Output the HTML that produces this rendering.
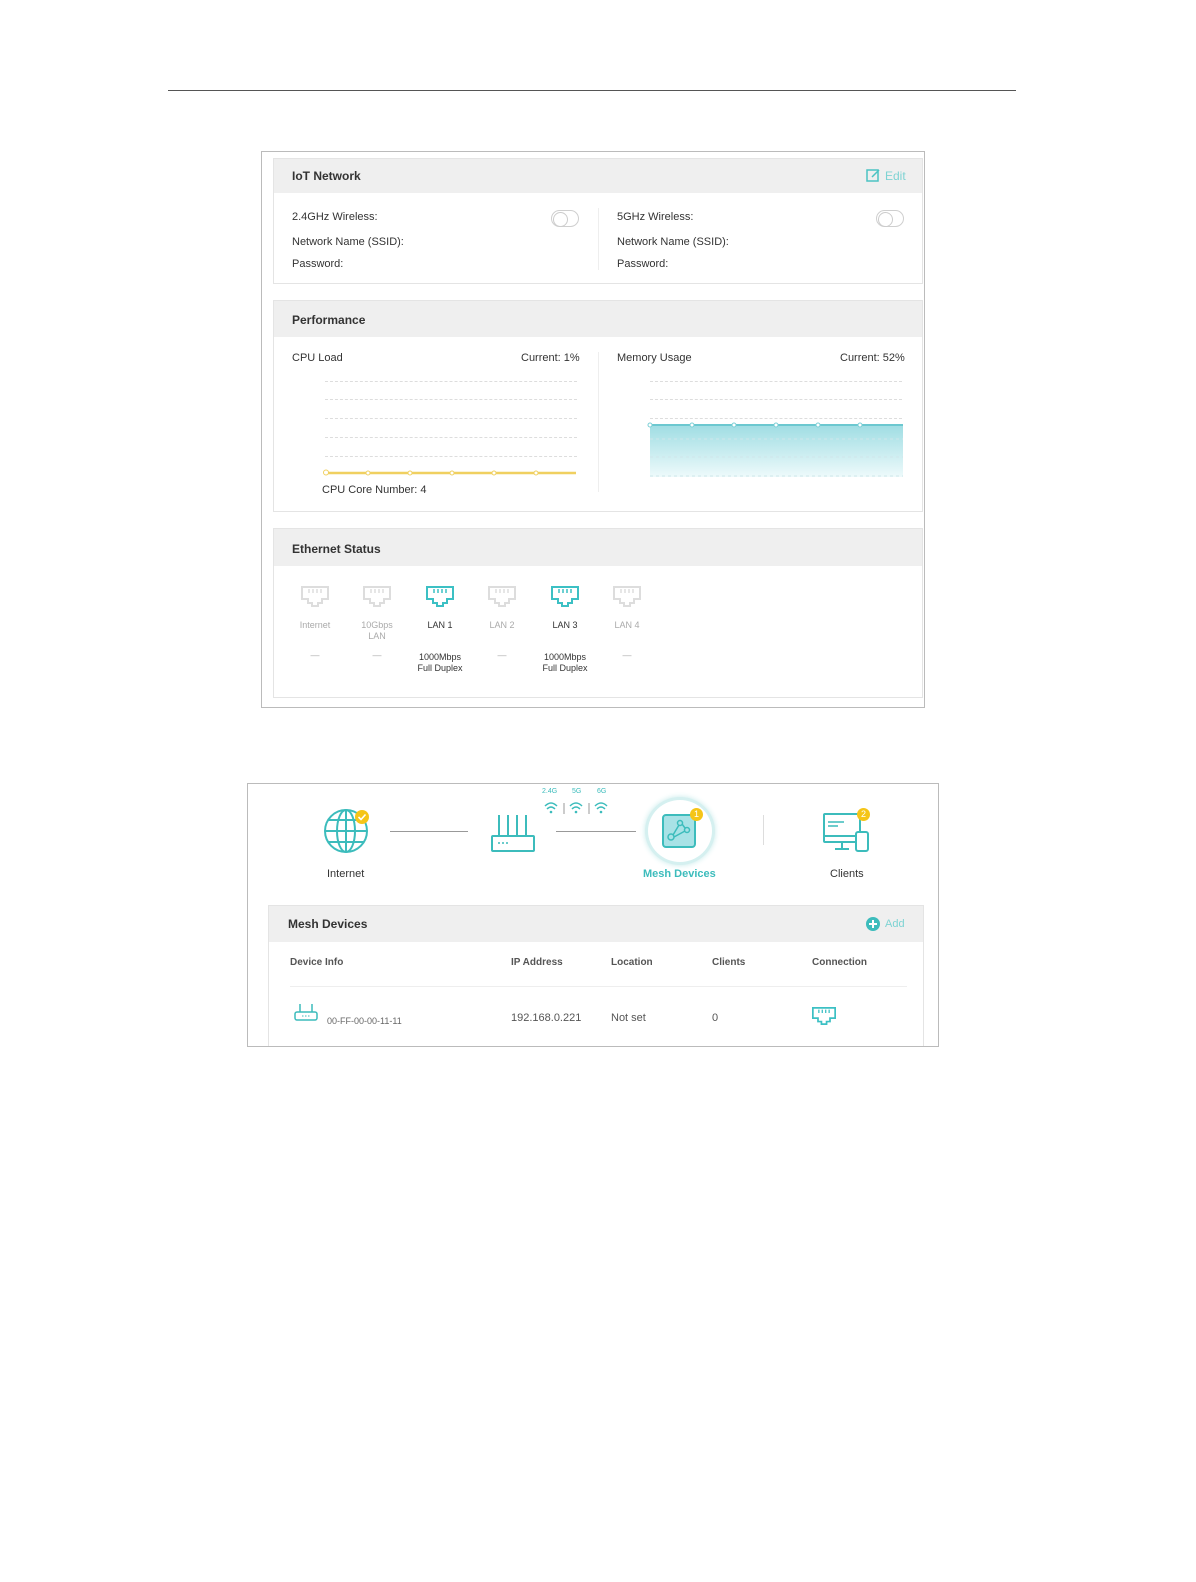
<!DOCTYPE html>
<html style="width:1196px;height:1582px;overflow:hidden"><head><meta charset="utf-8"><style>
*{margin:0;padding:0;box-sizing:border-box}
html,body{width:1196px;height:1582px;overflow:hidden}
body{background:#fff;position:relative;font-family:"Liberation Sans",sans-serif;color:#333}
.a{position:absolute}
.t{font-size:11px;color:#333;white-space:nowrap}
.b{font-weight:bold;font-size:12px;color:#333}
.panel{position:absolute;border:1px solid #e4e4e4;background:#fff;overflow:hidden}
.hdr{position:absolute;left:0;right:0;top:0;background:#efefef}
.tog{position:absolute;width:28px;height:17px;border:1px solid #cfcfcf;border-radius:9px;background:#fff}
.tog:after{content:"";position:absolute;left:1px;top:1px;width:13px;height:13px;border-radius:50%;border:1px solid #ccc;background:#fff}
.dash{position:absolute;border-top:1px dashed #ddd;height:0}
.eth{position:absolute;text-align:center;font-size:9px;color:#aaa;width:50px}
</style></head><body>
<div class="a" style="left:168px;top:90px;width:848px;height:1px;background:#555"></div>

<div class="a" style="left:261px;top:151px;width:664px;height:557px;border:1px solid #bbb"></div>

<div class="panel" style="left:273px;top:158px;width:650px;height:126px">
 <div class="hdr" style="height:34px"></div>
 <div class="a b" style="left:18px;top:10px">IoT Network</div>
 <svg class="a" style="left:592px;top:9px" width="15" height="15" viewBox="0 0 15 15"><rect x="1" y="2" width="11" height="11" fill="none" stroke="#4cc3c3" stroke-width="1.5"/><path d="M6 9 L13 2" stroke="#4cc3c3" stroke-width="1.5"/></svg>
 <div class="a" style="left:611px;top:10px;font-size:12px;color:#7dd3d3">Edit</div>
 <div class="a t" style="left:18px;top:52px">2.4GHz Wireless:</div>
 <div class="a t" style="left:18px;top:77px">Network Name (SSID):</div>
 <div class="a t" style="left:18px;top:99px">Password:</div>
 <div class="tog" style="left:277px;top:51px"></div>
 <div class="a" style="left:324px;top:49px;width:1px;height:62px;background:#eee"></div>
 <div class="a t" style="left:343px;top:52px">5GHz Wireless:</div>
 <div class="a t" style="left:343px;top:77px">Network Name (SSID):</div>
 <div class="a t" style="left:343px;top:99px">Password:</div>
 <div class="tog" style="left:602px;top:51px"></div>
</div>

<div class="panel" style="left:273px;top:300px;width:650px;height:212px">
 <div class="hdr" style="height:36px"></div>
 <div class="a b" style="left:18px;top:12px">Performance</div>
 <div class="a t" style="left:18px;top:51px">CPU Load</div>
 <div class="a t" style="left:247px;top:51px">Current: 1%</div>
 <div class="a" style="left:324px;top:51px;width:1px;height:140px;background:#eee"></div>
 <div class="a t" style="left:343px;top:51px">Memory Usage</div>
 <div class="a t" style="left:566px;top:51px">Current: 52%</div>
 <div class="dash" style="left:51px;top:80px;width:252px"></div>
 <div class="dash" style="left:51px;top:98px;width:252px"></div>
 <div class="dash" style="left:51px;top:117px;width:252px"></div>
 <div class="dash" style="left:51px;top:136px;width:252px"></div>
 <div class="dash" style="left:51px;top:155px;width:252px"></div>
 <svg class="a" style="left:48px;top:166px" width="260" height="12"><path d="M4 6 H254" stroke="#f0d060" stroke-width="2.5"/><g fill="#fff" stroke="#f0d060" stroke-width="1"><circle cx="4" cy="5.5" r="2.5"/><circle cx="46" cy="6" r="2"/><circle cx="88" cy="6" r="2"/><circle cx="130" cy="6" r="2"/><circle cx="172" cy="6" r="2"/><circle cx="214" cy="6" r="2"/></g></svg>
 <div class="a t" style="left:48px;top:183px">CPU Core Number: 4</div>
 <div class="dash" style="left:376px;top:80px;width:252px"></div>
 <div class="dash" style="left:376px;top:98px;width:252px"></div>
 <div class="dash" style="left:376px;top:117px;width:252px"></div>
 <svg class="a" style="left:372px;top:118px" width="262" height="62">
  <defs><linearGradient id="g" x1="0" y1="0" x2="0" y2="1"><stop offset="0" stop-color="#9fdde3"/><stop offset="1" stop-color="#eefafb"/></linearGradient></defs>
  <path d="M4 6 H257 V58 H4 Z" fill="url(#g)"/>
  <path d="M4 6 H257" stroke="#6cc8d0" stroke-width="2"/>
  <g fill="#fff" stroke="#7ccfd6"><circle cx="4" cy="6" r="2"/><circle cx="46" cy="6" r="2"/><circle cx="88" cy="6" r="2"/><circle cx="130" cy="6" r="2"/><circle cx="172" cy="6" r="2"/><circle cx="214" cy="6" r="2"/></g>
  <path d="M4 20 H257 M4 38 H257 M4 57 H257" stroke="#cfe6ea" stroke-dasharray="3 3"/>
 </svg>
</div>

<div class="panel" style="left:273px;top:528px;width:650px;height:170px">
 <div class="hdr" style="height:37px"></div>
 <div class="a b" style="left:18px;top:13px">Ethernet Status</div>
</div>
<svg width="0" height="0" style="position:absolute;left:0;top:0"><defs>
 <g id="port"><path d="M1 1 H27 V13 H21 V17 H17 V20 H11 V17 H7 V13 H1 Z" fill="none" stroke-width="2"/><path d="M8 3 V7 M12 3 V7 M16 3 V7 M20 3 V7" stroke-width="1.5"/></g>
</defs></svg>
<svg class="a" style="left:301px;top:586px" width="28" height="21"><use href="#port" stroke="#ddd"/></svg>
<svg class="a" style="left:363px;top:586px" width="28" height="21"><use href="#port" stroke="#ddd"/></svg>
<svg class="a" style="left:426px;top:586px" width="28" height="21"><use href="#port" stroke="#3cc0c4"/></svg>
<svg class="a" style="left:488px;top:586px" width="28" height="21"><use href="#port" stroke="#ddd"/></svg>
<svg class="a" style="left:551px;top:586px" width="28" height="21"><use href="#port" stroke="#3cc0c4"/></svg>
<svg class="a" style="left:613px;top:586px" width="28" height="21"><use href="#port" stroke="#ddd"/></svg>
<div class="eth" style="left:290px;top:620px">Internet</div>
<div class="eth" style="left:352px;top:620px;line-height:11px">10Gbps<br>LAN</div>
<div class="eth" style="left:415px;top:620px;color:#333">LAN 1</div>
<div class="eth" style="left:477px;top:620px">LAN 2</div>
<div class="eth" style="left:540px;top:620px;color:#333">LAN 3</div>
<div class="eth" style="left:602px;top:620px">LAN 4</div>
<div class="eth" style="left:290px;top:650px">—</div>
<div class="eth" style="left:352px;top:650px">—</div>
<div class="eth" style="left:405px;top:652px;width:70px;color:#333;line-height:11px">1000Mbps<br>Full Duplex</div>
<div class="eth" style="left:477px;top:650px">—</div>
<div class="eth" style="left:530px;top:652px;width:70px;color:#333;line-height:11px">1000Mbps<br>Full Duplex</div>
<div class="eth" style="left:602px;top:650px">—</div>

<div class="a" style="left:247px;top:783px;width:692px;height:264px;border:1px solid #bbb"></div>
<svg class="a" style="left:320px;top:805px" width="56" height="52" viewBox="0 0 56 52">
 <g fill="none" stroke="#3cbcbc" stroke-width="2"><circle cx="26" cy="26" r="21"/><ellipse cx="26" cy="26" rx="9" ry="21"/><path d="M5 26 H47 M8 15 H44 M8 37 H44 M26 5 V47"/></g>
 <circle cx="42" cy="12" r="7" fill="#f5c518"/><path d="M38.5 12 L41 14.5 L45.5 9.5" stroke="#fff" stroke-width="1.6" fill="none"/>
</svg>
<div class="a t" style="left:327px;top:868px">Internet</div>
<div class="a" style="left:390px;top:831px;width:78px;height:1px;background:#999"></div>
<svg class="a" style="left:490px;top:812px" width="46" height="42"><g fill="none" stroke="#3cbcbc" stroke-width="2"><rect x="2" y="24" width="42" height="15" rx="1"/><path d="M9 24 V3 M18 24 V3 M27 24 V3 M36 24 V3"/></g><path d="M8 31 h2 M12 31 h2 M16 31 h2" stroke="#3cbcbc" stroke-width="1.5"/></svg>
<div class="a" style="left:542px;top:788px;font-size:7px;color:#3cbcbc">2.4G</div>
<div class="a" style="left:572px;top:788px;font-size:7px;color:#3cbcbc">5G</div>
<div class="a" style="left:597px;top:788px;font-size:7px;color:#3cbcbc">6G</div>
<svg class="a" style="left:542px;top:800px" width="70" height="16"><g fill="none" stroke="#3cbcbc" stroke-width="1.5"><path d="M3 6 Q9 0 15 6 M5 9 Q9 5 13 9"/><path d="M28 6 Q34 0 40 6 M30 9 Q34 5 38 9"/><path d="M53 6 Q59 0 65 6 M55 9 Q59 5 63 9"/></g><g fill="#3cbcbc"><circle cx="9" cy="12" r="1.3"/><circle cx="34" cy="12" r="1.3"/><circle cx="59" cy="12" r="1.3"/></g><path d="M22 3 V14 M47 3 V14" stroke="#999" stroke-width="1"/></svg>
<div class="a" style="left:556px;top:831px;width:80px;height:1px;background:#999"></div>
<div class="a" style="left:645px;top:797px;width:70px;height:68px;border-radius:50%;border:3px solid #d5f0f0;box-shadow:0 0 6px #c5eaea;background:#fff"></div>
<svg class="a" style="left:660px;top:812px" width="40" height="40"><rect x="3" y="3" width="32" height="32" rx="3" fill="#a8e2e6" stroke="#3cbcbc" stroke-width="2"/><g fill="none" stroke="#3cbcbc" stroke-width="1.5"><circle cx="11" cy="25" r="3"/><circle cx="20" cy="11" r="2.5"/><circle cx="27" cy="18" r="2.5"/><path d="M13 23 L19 13 M22 12 L25 16 M25 19 L14 25"/></g></svg>
<div class="a" style="left:690px;top:808px;width:13px;height:13px;border-radius:50%;background:#f5c518;color:#fff;font-size:9px;text-align:center;line-height:13px">1</div>
<div class="a" style="left:643px;top:868px;font-size:11px;color:#3cbcbc;font-weight:bold">Mesh Devices</div>
<div class="a" style="left:763px;top:815px;width:1px;height:30px;background:#ddd"></div>
<svg class="a" style="left:820px;top:810px" width="52" height="44"><g fill="none" stroke="#3cbcbc" stroke-width="2"><rect x="4" y="4" width="36" height="28" rx="1"/><path d="M4 26 H40 M22 32 V38 M15 39 H29"/><rect x="36" y="22" width="12" height="19" rx="2" fill="#fff"/><path d="M8 12 H24 M8 16 H18" stroke-width="1.5"/></g></svg>
<div class="a" style="left:857px;top:808px;width:13px;height:13px;border-radius:50%;background:#f5c518;color:#fff;font-size:9px;text-align:center;line-height:13px">2</div>
<div class="a t" style="left:830px;top:868px">Clients</div>

<div class="panel" style="left:268px;top:905px;width:656px;height:141px;border-bottom:none">
 <div class="hdr" style="height:36px"></div>
 <div class="a b" style="left:19px;top:11px">Mesh Devices</div>
 <svg class="a" style="left:597px;top:11px" width="14" height="14"><circle cx="7" cy="7" r="7" fill="#3cbcbc"/><path d="M7 3 V11 M3 7 H11" stroke="#fff" stroke-width="2"/></svg>
 <div class="a" style="left:616px;top:12px;font-size:11px;color:#7dd3d3">Add</div>
 <div class="a" style="left:21px;top:51px;font-size:10px;font-weight:bold;color:#555">Device Info</div>
 <div class="a" style="left:242px;top:51px;font-size:10px;font-weight:bold;color:#555">IP Address</div>
 <div class="a" style="left:342px;top:51px;font-size:10px;font-weight:bold;color:#555">Location</div>
 <div class="a" style="left:443px;top:51px;font-size:10px;font-weight:bold;color:#555">Clients</div>
 <div class="a" style="left:543px;top:51px;font-size:10px;font-weight:bold;color:#555">Connection</div>
 <div class="a" style="left:21px;top:80px;width:617px;height:1px;background:#eee"></div>
 <svg class="a" style="left:24px;top:96px" width="26" height="22"><g fill="none" stroke="#3cbcbc" stroke-width="1.5"><rect x="2" y="10" width="22" height="8" rx="2"/><path d="M7 10 V2 M19 10 V2"/></g><path d="M9 14 h1.5 M12 14 h1.5 M15 14 h1.5" stroke="#3cbcbc"/></svg>
 <div class="a" style="left:58px;top:110px;font-size:9px;color:#666">00-FF-00-00-11-11</div>
 <div class="a t" style="left:242px;top:106px;color:#555">192.168.0.221</div>
 <div class="a t" style="left:342px;top:106px;color:#555">Not set</div>
 <div class="a t" style="left:443px;top:106px;color:#555">0</div>
 <svg class="a" style="left:543px;top:101px" width="24" height="18" viewBox="0 0 28 21"><use href="#port" stroke="#3cc0c4"/></svg>
</div>
</body></html>
